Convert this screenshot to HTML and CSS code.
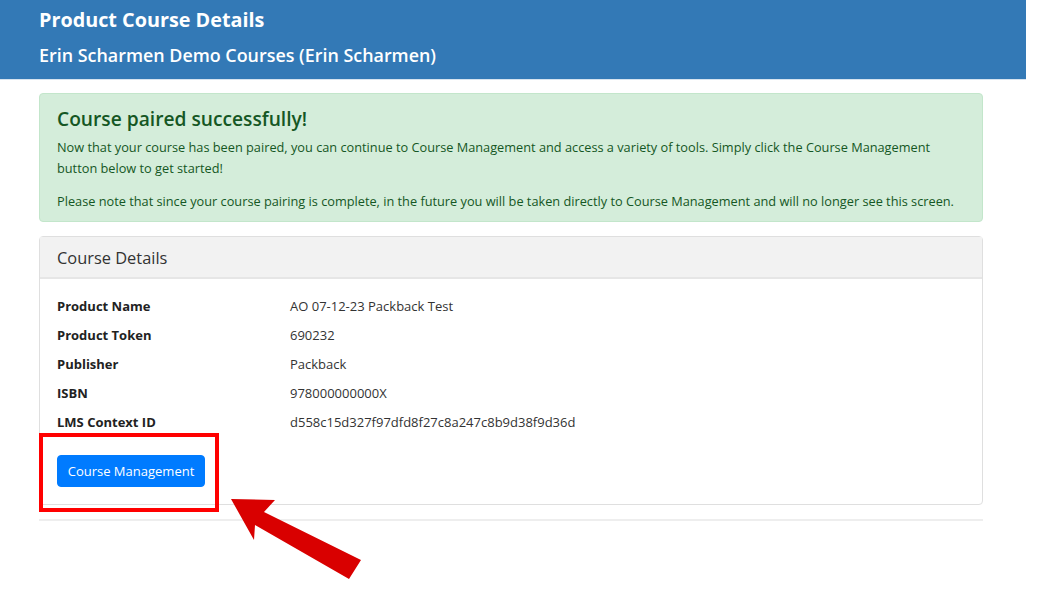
FILE: index.html
```html
<!DOCTYPE html>
<html>
<head>
<meta charset="utf-8">
<link rel="stylesheet" href="styles.css">
</head>
<body>
<header class="topbar">
  <h1 class="title">Product Course Details</h1>
  <h2 class="subtitle">Erin Scharmen Demo Courses (Erin Scharmen)</h2>
</header>
<main class="container">
  <div class="alert">
    <h3 class="alert-heading">Course paired successfully!</h3>
    <p>Now that your course has been paired, you can continue to Course Management and access a variety of tools. Simply click the Course Management button below to get started!</p>
    <p>Please note that since your course pairing is complete, in the future you will be taken directly to Course Management and will no longer see this screen.</p>
  </div>
  <section class="card">
    <div class="card-header">Course Details</div>
    <div class="card-body">
      <dl class="details">
        <dt>Product Name</dt><dd>AO 07-12-23 Packback Test</dd>
        <dt>Product Token</dt><dd>690232</dd>
        <dt>Publisher</dt><dd>Packback</dd>
        <dt>ISBN</dt><dd>978000000000X</dd>
        <dt>LMS Context ID</dt><dd>d558c15d327f97dfd8f27c8a247c8b9d38f9d36d</dd>
      </dl>
      <div class="btn-wrap">
        <button class="btn">Course Management</button>
        <span class="highlight-box"></span>
      </div>
    </div>
  </section>
  <hr class="rule">
</main>
<svg class="arrow" width="1039" height="594" viewBox="0 0 1039 594">
  <polygon points="231,499 275,500 264,512 361,560 349,579 255,525 254,540" fill="#d90000"/>
</svg>
</body>
</html>
```
FILE: styles.css
```css
* { box-sizing: border-box; }
html, body { margin: 0; padding: 0; }
body {
  font-family: "Open Sans", "Noto Sans", sans-serif;
  background: #fff;
  color: #212529;
  width: 1039px;
  height: 594px;
  overflow: hidden;
  position: relative;
}
.topbar {
  width: 1026px;
  height: 80px;
  background: #3379b6;
  border-bottom: 1px solid #d6e3ef;
  padding: 6px 0 0 39px;
  color: #fff;
}
.title {
  margin: 0;
  font-size: 19.8px;
  font-weight: 700;
  line-height: 28px;
}
.subtitle {
  margin: 9px 0 0;
  font-size: 17.9px;
  font-weight: 600;
  line-height: 24px;
}
.container {
  width: 944px;
  margin: 13px 0 0 39px;
}
.alert {
  background: #d4edda;
  border: 1px solid #c3e6cb;
  border-radius: 4px;
  color: #155724;
  padding: 11px 17px 9px;
  font-size: 12.75px;
  line-height: 21px;
}
.alert-heading {
  margin: 0 0 4px;
  font-size: 19.2px;
  font-weight: 600;
  line-height: 28px;
}
.alert p { margin: 0 0 12px; }
.alert p:last-child { margin-bottom: 0; }
.card {
  margin-top: 14px;
  border: 1px solid #dfdfdf;
  border-radius: 4px;
}
.card-header {
  background: #f2f2f2;
  border-bottom: 2px solid #e6e6e6;
  height: 42px;
  padding: 0 17px;
  display: flex;
  align-items: center;
  font-size: 16.4px;
  color: #333;
}
.card-body {
  padding: 12px 17px 17px;
}
.details {
  margin: 0;
  display: grid;
  grid-template-columns: 233px 1fr;
  grid-auto-rows: 29px;
  font-size: 13px;
  align-items: center;
}
.details dt { font-weight: 700; color: #222; }
.details dd { margin: 0; color: #333; }
.btn-wrap {
  position: relative;
  margin-top: 19px;
  width: 148px;
}
.btn {
  display: block;
  font-family: inherit;
  background: #007bff;
  color: #fff;
  border: 1px solid #007bff;
  border-radius: 4px;
  height: 32px;
  width: 148px;
  font-size: 13px;
  padding: 0;
}
.highlight-box {
  position: absolute;
  left: -18px;
  top: -22px;
  width: 180px;
  height: 79px;
  border: 4px solid #f00;
}
.rule {
  margin: 14px 0 0;
  border: 0;
  border-top: 2px solid #eee;
}
.arrow {
  position: absolute;
  left: 0;
  top: 0;
  pointer-events: none;
}
```
